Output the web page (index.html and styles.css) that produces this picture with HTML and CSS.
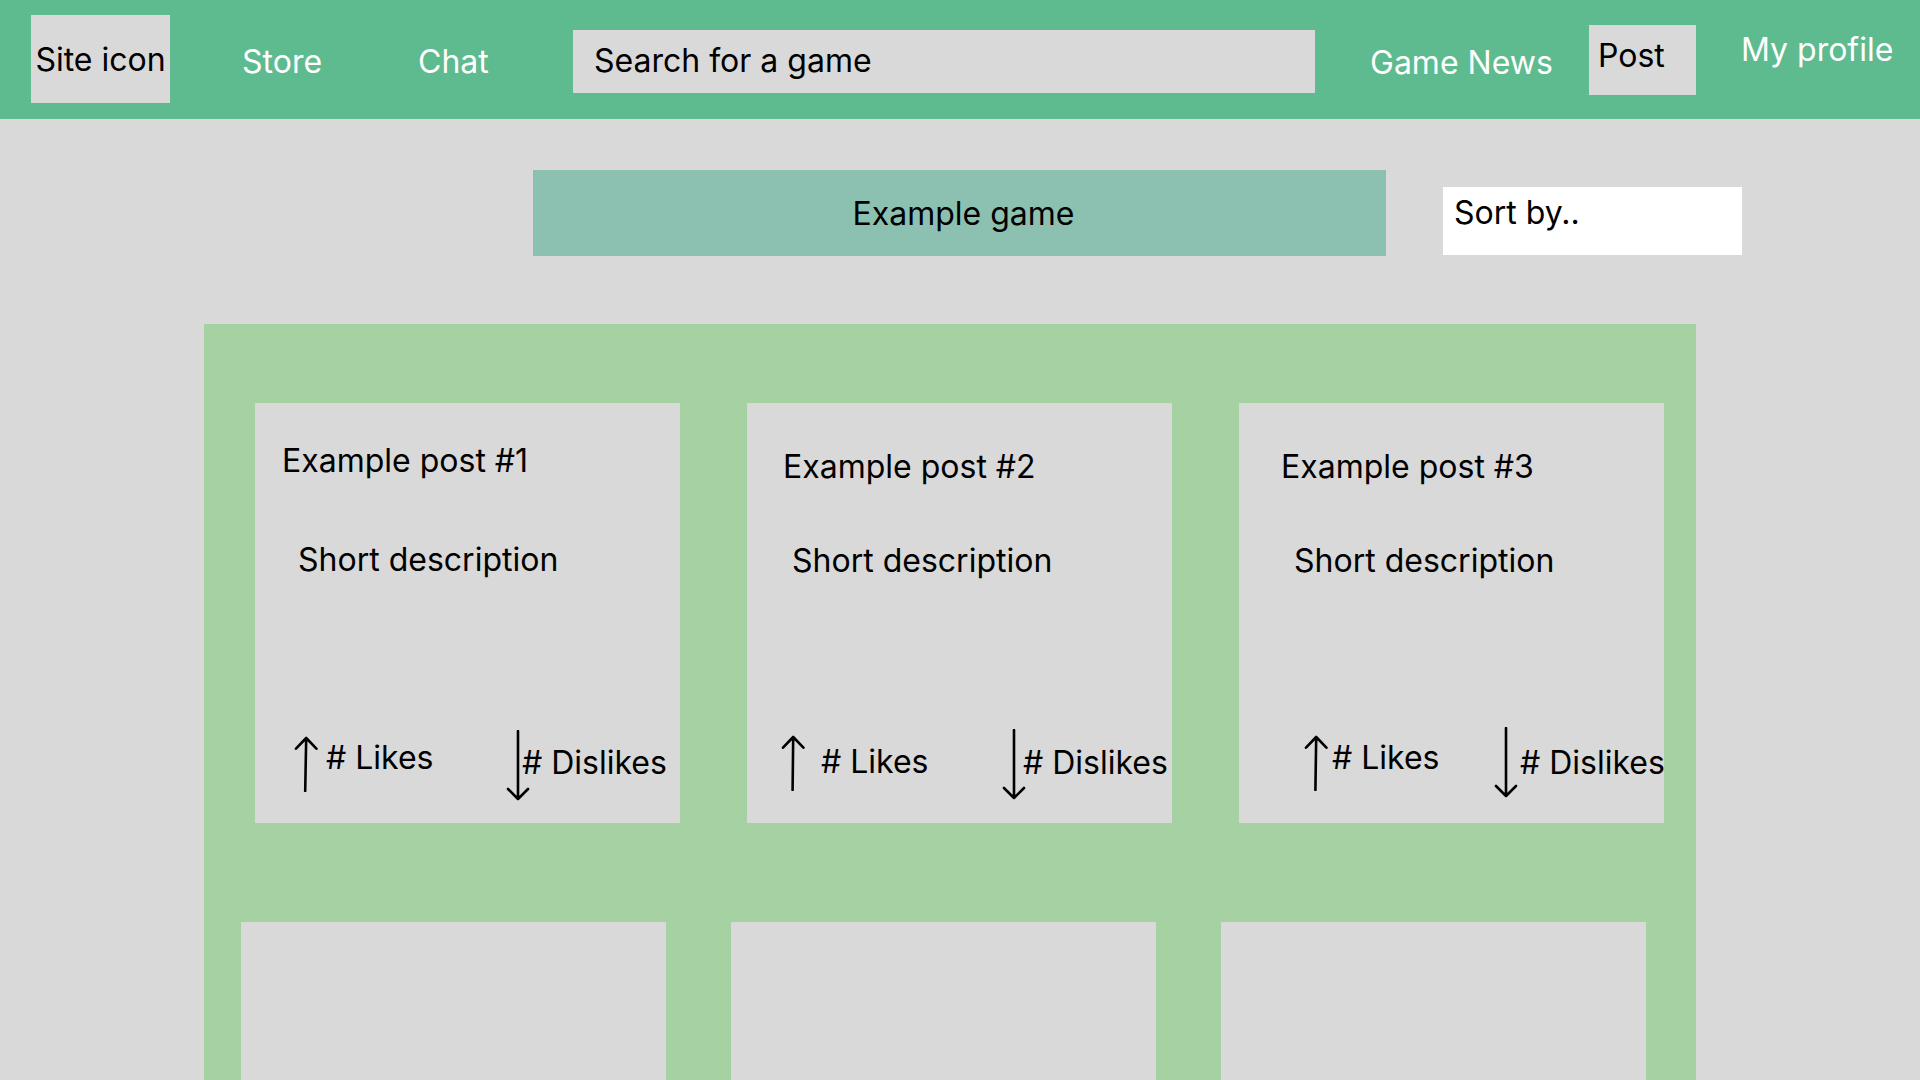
FILE: index.html
```html
<!DOCTYPE html>
<html lang="en">
<head>
<meta charset="utf-8">
<title>Game forum</title>
<link rel="stylesheet" href="styles.css">
</head>
<body>
<header class="topbar">
  <div class="site-icon">Site icon</div>
  <a class="nav-link nav-store">Store</a>
  <a class="nav-link nav-chat">Chat</a>
  <div class="search">Search for a game</div>
  <a class="nav-link nav-news">Game News</a>
  <div class="post-btn">Post</div>
  <a class="nav-link nav-profile">My profile</a>
</header>

<section class="game-row">
  <div class="game-title">Example game</div>
  <div class="sort-box">Sort by..</div>
</section>

<main class="board">
  <div class="posts posts-top">
    <article class="card card-1">
      <div class="card-title">Example post #1</div>
      <div class="card-desc">Short description</div>
      <div class="card-foot">
        <div class="likes">
          <svg class="arrow-up" viewBox="0 0 24 56" width="24" height="56"><path d="M11.2 55 L12.2 2 M2 12.7 L12.2 2 L22.4 12.7"/></svg>
          <span class="count">#&nbsp;Likes</span>
        </div>
        <div class="dislikes">
          <svg class="arrow-down" viewBox="0 0 24 72" width="24" height="72"><path d="M12 1 L12 69 M2 59 L12 69 L22 59"/></svg>
          <span class="count">#&nbsp;Dislikes</span>
        </div>
      </div>
    </article>
    <article class="card card-2">
      <div class="card-title">Example post #2</div>
      <div class="card-desc">Short description</div>
      <div class="card-foot">
        <div class="likes">
          <svg class="arrow-up" viewBox="0 0 24 56" width="24" height="56"><path d="M11.6 55 L12.2 2 M2 12.7 L12.2 2 L22.4 12.7"/></svg>
          <span class="count">#&nbsp;Likes</span>
        </div>
        <div class="dislikes">
          <svg class="arrow-down" viewBox="0 0 24 72" width="24" height="72"><path d="M12 1 L12 69 M2 59 L12 69 L22 59"/></svg>
          <span class="count">#&nbsp;Dislikes</span>
        </div>
      </div>
    </article>
    <article class="card card-3">
      <div class="card-title">Example post #3</div>
      <div class="card-desc">Short description</div>
      <div class="card-foot">
        <div class="likes">
          <svg class="arrow-up" viewBox="0 0 24 56" width="24" height="56"><path d="M11.4 55 L12.2 2 M2 12.7 L12.2 2 L22.4 12.7"/></svg>
          <span class="count">#&nbsp;Likes</span>
        </div>
        <div class="dislikes">
          <svg class="arrow-down" viewBox="0 0 24 72" width="24" height="72"><path d="M12 1 L12 69 M2 59 L12 69 L22 59"/></svg>
          <span class="count">#&nbsp;Dislikes</span>
        </div>
      </div>
    </article>
  </div>
  <div class="posts posts-bottom">
    <article class="card card-empty"></article>
    <article class="card card-empty"></article>
    <article class="card card-empty"></article>
  </div>
</main>
</body>
</html>
```

FILE: styles.css
```css
* { box-sizing: border-box; }

html, body {
  margin: 0;
  padding: 0;
}

body {
  width: 1920px;
  height: 1080px;
  overflow: hidden;
  background: #d9d9d9;
  font-family: Inter, "Noto Sans", "Liberation Sans", sans-serif;
  font-size: 32px;
  line-height: 39px;
  color: #000;
}

/* ---------- top bar ---------- */
.topbar {
  display: flex;
  align-items: flex-start;
  height: 119px;
  background: #5eba8f;
}

.site-icon {
  margin-left: 31px;
  margin-top: 15px;
  width: 139px;
  height: 88px;
  background: #d9d9d9;
  display: flex;
  align-items: center;
  justify-content: center;
  white-space: nowrap;
}

.nav-link {
  color: #fff;
  white-space: nowrap;
}

.nav-store {
  margin-left: 72px;
  margin-top: 42px;
  width: 176px;
}

.nav-chat {
  margin-top: 42px;
  width: 155px;
}

.search {
  margin-top: 30px;
  width: 742px;
  height: 63px;
  padding: 11px 0 0 21px;
  background: #d9d9d9;
  white-space: nowrap;
}

.nav-news {
  margin-left: 55px;
  margin-top: 43px;
  width: 219px;
}

.post-btn {
  margin-top: 25px;
  width: 107px;
  height: 70px;
  padding: 11px 0 0 9px;
  background: #d9d9d9;
}

.nav-profile {
  margin-left: 45px;
  margin-top: 30px;
}

/* ---------- game row ---------- */
.game-row {
  display: flex;
  align-items: flex-start;
  margin-top: 51px;
}

.game-title {
  margin-left: 533px;
  width: 853px;
  height: 86px;
  padding-left: 8px;
  background: #8cc0b0;
  display: flex;
  align-items: center;
  justify-content: center;
}

.sort-box {
  margin-left: 57px;
  margin-top: 17px;
  width: 299px;
  height: 68px;
  padding: 6px 0 0 11px;
  background: #fff;
}

/* ---------- board ---------- */
.board {
  margin-top: 68px;
  margin-left: 204px;
  width: 1492px;
  height: 820px;
  padding-top: 79px;
  background: #a6d1a3;
}

.posts {
  display: flex;
}

.posts-top {
  margin-left: 51px;
  gap: 67px;
}

.posts-bottom {
  margin-top: 99px;
  margin-left: 37px;
  gap: 65px;
}

.card {
  width: 425px;
  height: 420px;
  background: #d9d9d9;
  display: flex;
  flex-direction: column;
  align-items: flex-start;
  flex-shrink: 0;
}

.card-title,
.card-desc,
.count {
  white-space: nowrap;
}

.card-foot {
  display: flex;
  align-items: flex-start;
}

.likes,
.dislikes {
  display: flex;
  align-items: flex-start;
  flex-shrink: 0;
}

.arrow-up,
.arrow-down {
  display: block;
  flex-shrink: 0;
  fill: none;
  stroke: #000;
  stroke-width: 2.6;
  stroke-linecap: round;
  stroke-linejoin: round;
}

/* card 1 */
.card-1 .card-title { margin: 38px 0 0 27px; }
.card-1 .card-desc { margin: 60px 0 0 43px; }
.card-1 .card-foot { margin-top: 148px; }
.card-1 .likes { margin-left: 39px; width: 212px; }
.card-1 .likes .arrow-up { margin-top: 9px; }
.card-1 .likes .count { margin: 11px 0 0 8px; }
.card-1 .dislikes .arrow-down { margin-top: 3px; }
.card-1 .dislikes .count { margin: 16px 0 0 -8px; }

/* card 2 */
.card-2 .card-title { margin: 44px 0 0 36px; }
.card-2 .card-desc { margin: 55px 0 0 45px; }
.card-2 .card-foot { margin-top: 147px; }
.card-2 .likes { margin-left: 34px; width: 221px; }
.card-2 .likes .arrow-up { margin-top: 8px; }
.card-2 .likes .count { margin: 15px 0 0 16px; }
.card-2 .dislikes .arrow-down { margin-top: 2px; }
.card-2 .dislikes .count { margin: 16px 0 0 -3px; }

/* card 3 */
.card-3 .card-title { margin: 44px 0 0 42px; }
.card-3 .card-desc { margin: 55px 0 0 55px; }
.card-3 .card-foot { margin-top: 147px; }
.card-3 .likes { margin-left: 65px; width: 190px; }
.card-3 .likes .arrow-up { margin-top: 8px; }
.card-3 .likes .count { margin: 11px 0 0 4px; }
.card-3 .dislikes .arrow-down { margin-top: 0; }
.card-3 .dislikes .count { margin: 16px 0 0 2px; }
```
